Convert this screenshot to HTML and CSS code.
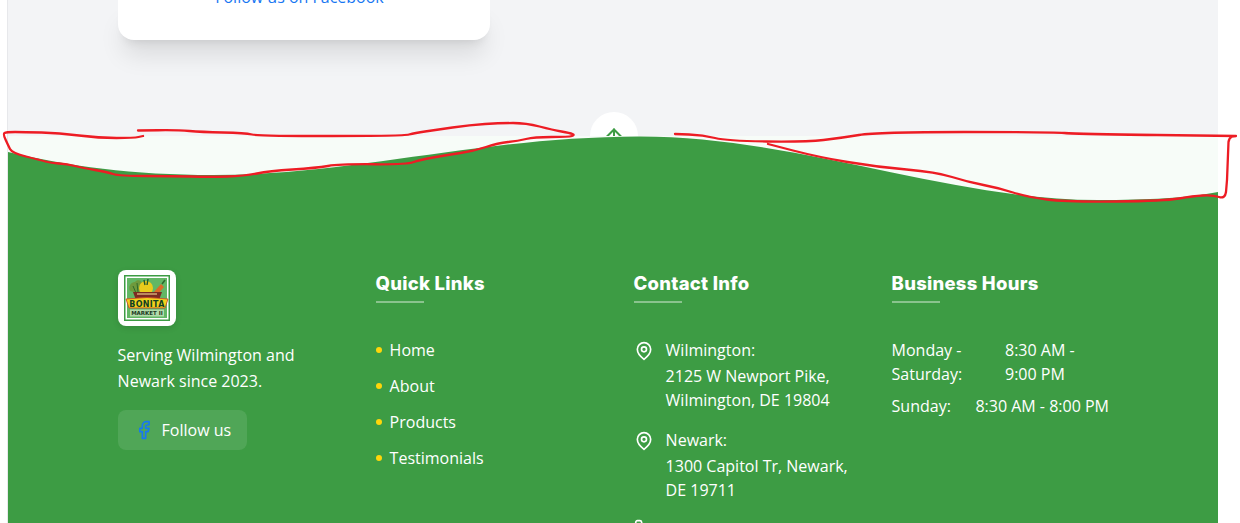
FILE: index.html
```html
<!DOCTYPE html>
<html lang="en">
<head>
<meta charset="utf-8">
<title>Bonita Market II</title>
<link rel="stylesheet" href="styles.css">
</head>
<body>
<main class="page">
  <section class="upper">
    <div class="card"><a class="card-link" href="#">Follow us on Facebook</a></div>
  </section>
  <footer class="footer">
    <a class="to-top" href="#" aria-label="Back to top">
      <svg width="20" height="20" viewBox="0 0 24 24" fill="none" stroke="#3d9c44" stroke-width="2.4" stroke-linecap="square"><path d="M12 22V3M3 12l9-9 9 9"/></svg>
    </a>
    <div class="wave">
      <svg class="wave-svg" viewBox="0 0 1210 64" preserveAspectRatio="none"><path d="M0 16C60 30 125 39 205 39C350 39 470 1 632 0.5C790 0.5 940 64 1090 64C1140 64 1180 62 1210 56V64H0Z" fill="#3d9c44"/></svg>
    </div>
    <div class="footer-body">
      <div class="grid">
        <div class="col">
          <div class="logo">
            <svg width="46" height="46" viewBox="0 0 46 46">
              <rect x="0.75" y="0.75" width="44.5" height="44.5" fill="#fff" stroke="#3d9c44" stroke-width="1.5"/>
              <rect x="3" y="3" width="40" height="40" fill="#62b765"/>
              <path d="M6 16c-2-5 1-9 5-9 2-3 7-2 7 2 1 3-1 8-4 9z" fill="#6f9a3c"/>
              <path d="M9 11l3 7M13 8l1 9" stroke="#2f6a2a" stroke-width="1"/>
              <ellipse cx="22" cy="13" rx="7" ry="7" fill="#e9cb1c"/>
              <path d="M20 5l1 5M24 4l-1 6" stroke="#24592a" stroke-width="1.4"/>
              <path d="M29 18l8-9 3 3-7 8z" fill="#dc6a28"/>
              <path d="M38 9l3-4" stroke="#2c6a2c" stroke-width="1.6"/>
              <path d="M9 17h29l-3 8H12z" fill="#7c2a22"/>
              <path d="M13 19h20" stroke="#e8c88a" stroke-width="1.2"/>
              <path d="M2 24q21-3 42 0l-3 9H5z" fill="#f2d11c" stroke="#c9402a" stroke-width=".8"/>
              <text class="logo-big" x="23" y="31.5" text-anchor="middle">BONITA</text>
              <rect x="6" y="34.5" width="34" height="7" fill="#b1dbaa"/>
              <text class="logo-small" x="23" y="40.4" text-anchor="middle">MARKET II</text>
            </svg>
          </div>
          <p class="blurb">Serving Wilmington and Newark since 2023.</p>
          <a class="follow" href="#">
            <svg class="ico" width="20" height="20" viewBox="0 0 24 24" fill="none" stroke="#1877f2" stroke-width="2" stroke-linecap="round" stroke-linejoin="round"><path d="M18 2h-3a5 5 0 0 0-5 5v3H7v4h3v8h4v-8h3l1-4h-4V7a1 1 0 0 1 1-1h3z"/></svg>
            <span>Follow us</span>
          </a>
        </div>
        <div class="col">
          <h3 class="heading">Quick Links</h3>
          <ul class="links">
            <li class="link"><span class="dot"></span><a href="#">Home</a></li>
            <li class="link"><span class="dot"></span><a href="#">About</a></li>
            <li class="link"><span class="dot"></span><a href="#">Products</a></li>
            <li class="link"><span class="dot"></span><a href="#">Testimonials</a></li>
          </ul>
        </div>
        <div class="col">
          <h3 class="heading">Contact Info</h3>
          <div class="contact">
            <div class="item">
              <svg class="ico pin" width="20" height="20" viewBox="0 0 24 24" fill="none" stroke="#fff" stroke-width="2" stroke-linecap="round" stroke-linejoin="round"><path d="M20 10c0 6-8 12-8 12s-8-6-8-12a8 8 0 0 1 16 0Z"/><circle cx="12" cy="10" r="3"/></svg>
              <div><div class="place">Wilmington:</div><div>2125 W Newport Pike,<br>Wilmington, DE 19804</div></div>
            </div>
            <div class="item">
              <svg class="ico pin" width="20" height="20" viewBox="0 0 24 24" fill="none" stroke="#fff" stroke-width="2" stroke-linecap="round" stroke-linejoin="round"><path d="M20 10c0 6-8 12-8 12s-8-6-8-12a8 8 0 0 1 16 0Z"/><circle cx="12" cy="10" r="3"/></svg>
              <div><div class="place">Newark:</div><div>1300 Capitol Tr, Newark,<br>DE 19711</div></div>
            </div>
            <div class="item">
              <svg class="ico phone" width="20" height="20" viewBox="0 0 24 24" fill="none" stroke="#fff" stroke-width="2" stroke-linecap="round" stroke-linejoin="round"><path d="M22 16.9v3a2 2 0 0 1-2.2 2 19.8 19.8 0 0 1-8.6-3.1 19.5 19.5 0 0 1-6-6A19.8 19.8 0 0 1 2.1 4.2 2 2 0 0 1 4.1 2h3a2 2 0 0 1 2 1.7c.1 1 .4 1.9.7 2.8a2 2 0 0 1-.5 2.1L8.1 9.9a16 16 0 0 0 6 6l1.3-1.3a2 2 0 0 1 2.1-.4c.9.3 1.8.6 2.8.7a2 2 0 0 1 1.7 2Z"/></svg>
            </div>
          </div>
        </div>
        <div class="col">
          <h3 class="heading">Business Hours</h3>
          <div class="hours">
            <div class="row-wrap"><span>Monday - Saturday:</span><span>8:30 AM - 9:00 PM</span></div>
            <div class="row-flat"><span>Sunday:</span><span>8:30 AM - 8:00 PM</span></div>
          </div>
        </div>
      </div>
    </div>
  </footer>
  <svg class="scribble" viewBox="0 0 1240 523" fill="none" stroke="#ed1c24" stroke-width="2.3" stroke-linecap="round" stroke-linejoin="round">
    <path d="M143 136L138.5 137Q134 138 116.5 138Q99 138 79 135.5Q59 133 41.5 132.5Q24 132 15 132Q6 132 4.5 133Q3 134 5.5 139.5Q8 145 10 149Q12 153 26 156.5Q40 160 45.5 161.5Q51 163 59 163.5Q67 164 75 166Q83 168 95 170Q107 172 113 174Q119 176 146.5 176Q174 176 191.5 176.5Q209 177 227 176.5Q245 176 257 173.5Q269 171 292.5 169.5Q316 168 328 166Q340 164 373.5 164.25Q407 164.5 413 162.25Q419 160 433 157.5Q447 155 460.5 153Q474 151 486 147Q498 143 508 142Q518 141 526 139Q534 137 551.5 137Q569 137 572 136Q575 135 572.5 134Q570 133 561.5 131.5Q553 130 539.5 126.5Q526 123 513 123Q500 123 485 124Q470 125 452.5 127.5Q435 130 425 131.5Q415 133 409 134.5Q403 136 331 136Q259 136 252 134.5Q245 133 223 132.5Q201 132 189.5 131Q178 130 158 130.25L138 130.5"/>
    <path d="M675 134L689 134.5Q703 135 715 138Q727 141 766.5 141.5Q806 142 823.5 140Q841 138 859 135Q877 132 964 132Q1051 132 1064.5 133Q1078 134 1157 135L1236 136L1232 136.5Q1229 138 1228.5 142L1227 180L1226 192Q1225 199 1219 197Q1213 195 1203 195.5Q1193 196 1179 198.5Q1165 201 1116 201.5Q1067 202 1047 199.5Q1027 197 1013 192.5Q999 188 983.5 185Q968 182 952 177Q936 172 906.5 169.5Q877 167 847.5 162Q818 157 793 150.5L768 144"/>
  </svg>
</main>
</body>
</html>
```
FILE: styles.css
```css
* { box-sizing: border-box; }
html, body { margin: 0; height: 523px; overflow: hidden; background: #fff; }
body { font-family: "Open Sans", "Liberation Sans", sans-serif; font-size: 16px; color: #fff; }
a { color: inherit; text-decoration: none; }
.page { position: relative; width: 1211px; height: 523px; margin-left: 7px; border-left: 1px solid #e7e8eb; }
.upper { height: 136px; background: #f3f4f6; padding-left: 110px; }
.card { width: 372px; height: 40px; background: #fff; border-radius: 0 0 16px 16px; box-shadow: 0 20px 25px -5px rgba(0,0,0,.1), 0 8px 10px -6px rgba(0,0,0,.1); text-align: center; color: #1877f2; overflow: hidden; font-size: 16px; line-height: 24px; }
.card-link { display: block; margin-top: -15px; margin-left: -9px; }
.footer { position: relative; background: #3d9c44; height: 387px; }
.to-top { position: absolute; left: 582px; top: -24px; width: 48px; height: 48px; border-radius: 50%; background: #fff; display: flex; justify-content: center; padding-top: 15px; }
.wave { position: relative; height: 64px; background: #f7fcf8; }
.wave-svg { display: block; width: 100%; height: 64px; }
.footer-body { padding: 70px 109.6px 0; }
.grid { display: grid; grid-template-columns: repeat(3, 216px) 217.4px; gap: 42px; width: 991px; }
.logo { width: 58px; height: 56px; margin-left: 0.4px; background: #fff; border-radius: 8px; display: flex; align-items: center; justify-content: center; box-shadow: 0 2px 6px rgba(0,0,0,.12); }
.logo-big { font: 800 8px "DejaVu Sans", sans-serif; fill: #123f24; letter-spacing: .3px; }
.logo-small { font: 700 5.5px "DejaVu Sans", sans-serif; fill: #1d3b24; }
.blurb { margin: 16px 0 16px; line-height: 26px; font-size: 16px; width: 200px; }
.follow { display: inline-flex; align-items: center; gap: 8px; height: 40px; padding: 0 16px; border-radius: 8px; background: rgba(255,255,255,.1); }
.ico { display: block; flex: none; }
.heading { position: relative; margin: 0; height: 33px; font: 800 18.5px/26px "Inter", "Liberation Sans", sans-serif; letter-spacing: .25px; color: #fff; }
.heading::after { content: ""; position: absolute; left: 0; top: 31px; width: 48px; height: 2px; background: rgba(255,255,255,.4); }
.links { list-style: none; margin: 35px 0 0; padding: 0; display: flex; flex-direction: column; gap: 12px; }
.link { display: flex; align-items: center; gap: 8px; line-height: 24px; }
.dot { width: 6px; height: 6px; border-radius: 50%; background: #ffd60a; }
.contact { margin-top: 35px; display: flex; flex-direction: column; gap: 16px; line-height: 24px; }
.item { display: flex; gap: 12px; }
.pin { margin-top: 3px; }
.phone { margin-top: 1px; }
.place { margin-bottom: 2px; }
.hours { margin-top: 35px; line-height: 24px; }
.row-wrap { display: grid; grid-template-columns: 113.4px 103px; }
.row-flat { display: flex; justify-content: space-between; margin-top: 8px; }
.scribble { position: absolute; left: -8px; top: 0; width: 1240px; height: 523px; pointer-events: none; }
```
